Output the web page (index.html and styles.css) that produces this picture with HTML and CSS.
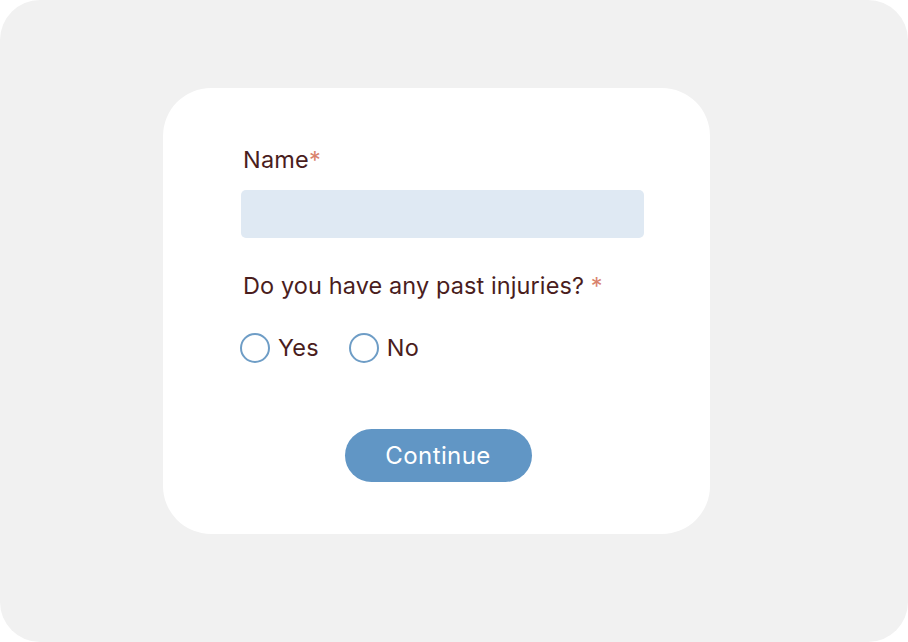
FILE: index.html
```html
<!DOCTYPE html>
<html>
<head>
<meta charset="utf-8">
<link rel="stylesheet" href="styles.css">
</head>
<body>
<div class="stage">
  <form class="card">
    <label class="label">Name<span class="req">*</span></label>
    <div class="input"></div>
    <div class="label q">Do you have any past injuries? <span class="req">*</span></div>
    <div class="radios">
      <span class="radio"><span class="circle"></span>Yes</span>
      <span class="radio"><span class="circle"></span>No</span>
    </div>
    <div class="actions"><span class="btn">Continue</span></div>
  </form>
</div>
</body>
</html>
```
FILE: styles.css
```css
html, body { margin: 0; padding: 0; background: #ffffff; }
.stage {
  width: 908px; height: 642px; box-sizing: border-box;
  background: #f1f1f1; border-radius: 40px;
  padding: 88px 0 0 163px;
}
.card {
  width: 547px; height: 446px; box-sizing: border-box;
  background: #fff; border-radius: 48px;
  padding: 57px 66px 0 78px;
  display: flex; flex-direction: column;
  font-family: Inter, "Noto Sans", sans-serif;
  color: #4a1d1d;
  letter-spacing: 0.2px;
}
.label { font-size: 23.5px; line-height: 30px; display: block; padding-left: 2px; }
.q { margin-top: 33px; letter-spacing: 0.1px; }
.req { color: #d9826d; }
.input {
  margin-top: 15px; height: 48px; width: 403px;
  background: #dfe9f3; border-radius: 5px;
}
.radios { display: flex; gap: 30px; margin-top: 31px; margin-left: -1px; }
.radio { display: flex; align-items: center; gap: 8px; font-size: 23.5px; line-height: 32px; }
.circle {
  width: 26px; height: 26px; border: 2px solid #6e9dc6; border-radius: 50%;
}
.actions { display: flex; justify-content: center; margin-top: 65px; width: 394px; }
.btn {
  width: 187px; height: 53px; border-radius: 27px; background: #6196c5;
  color: #fff; font-size: 24px; letter-spacing: 0.4px; display: flex; align-items: center; justify-content: center;
}
```
